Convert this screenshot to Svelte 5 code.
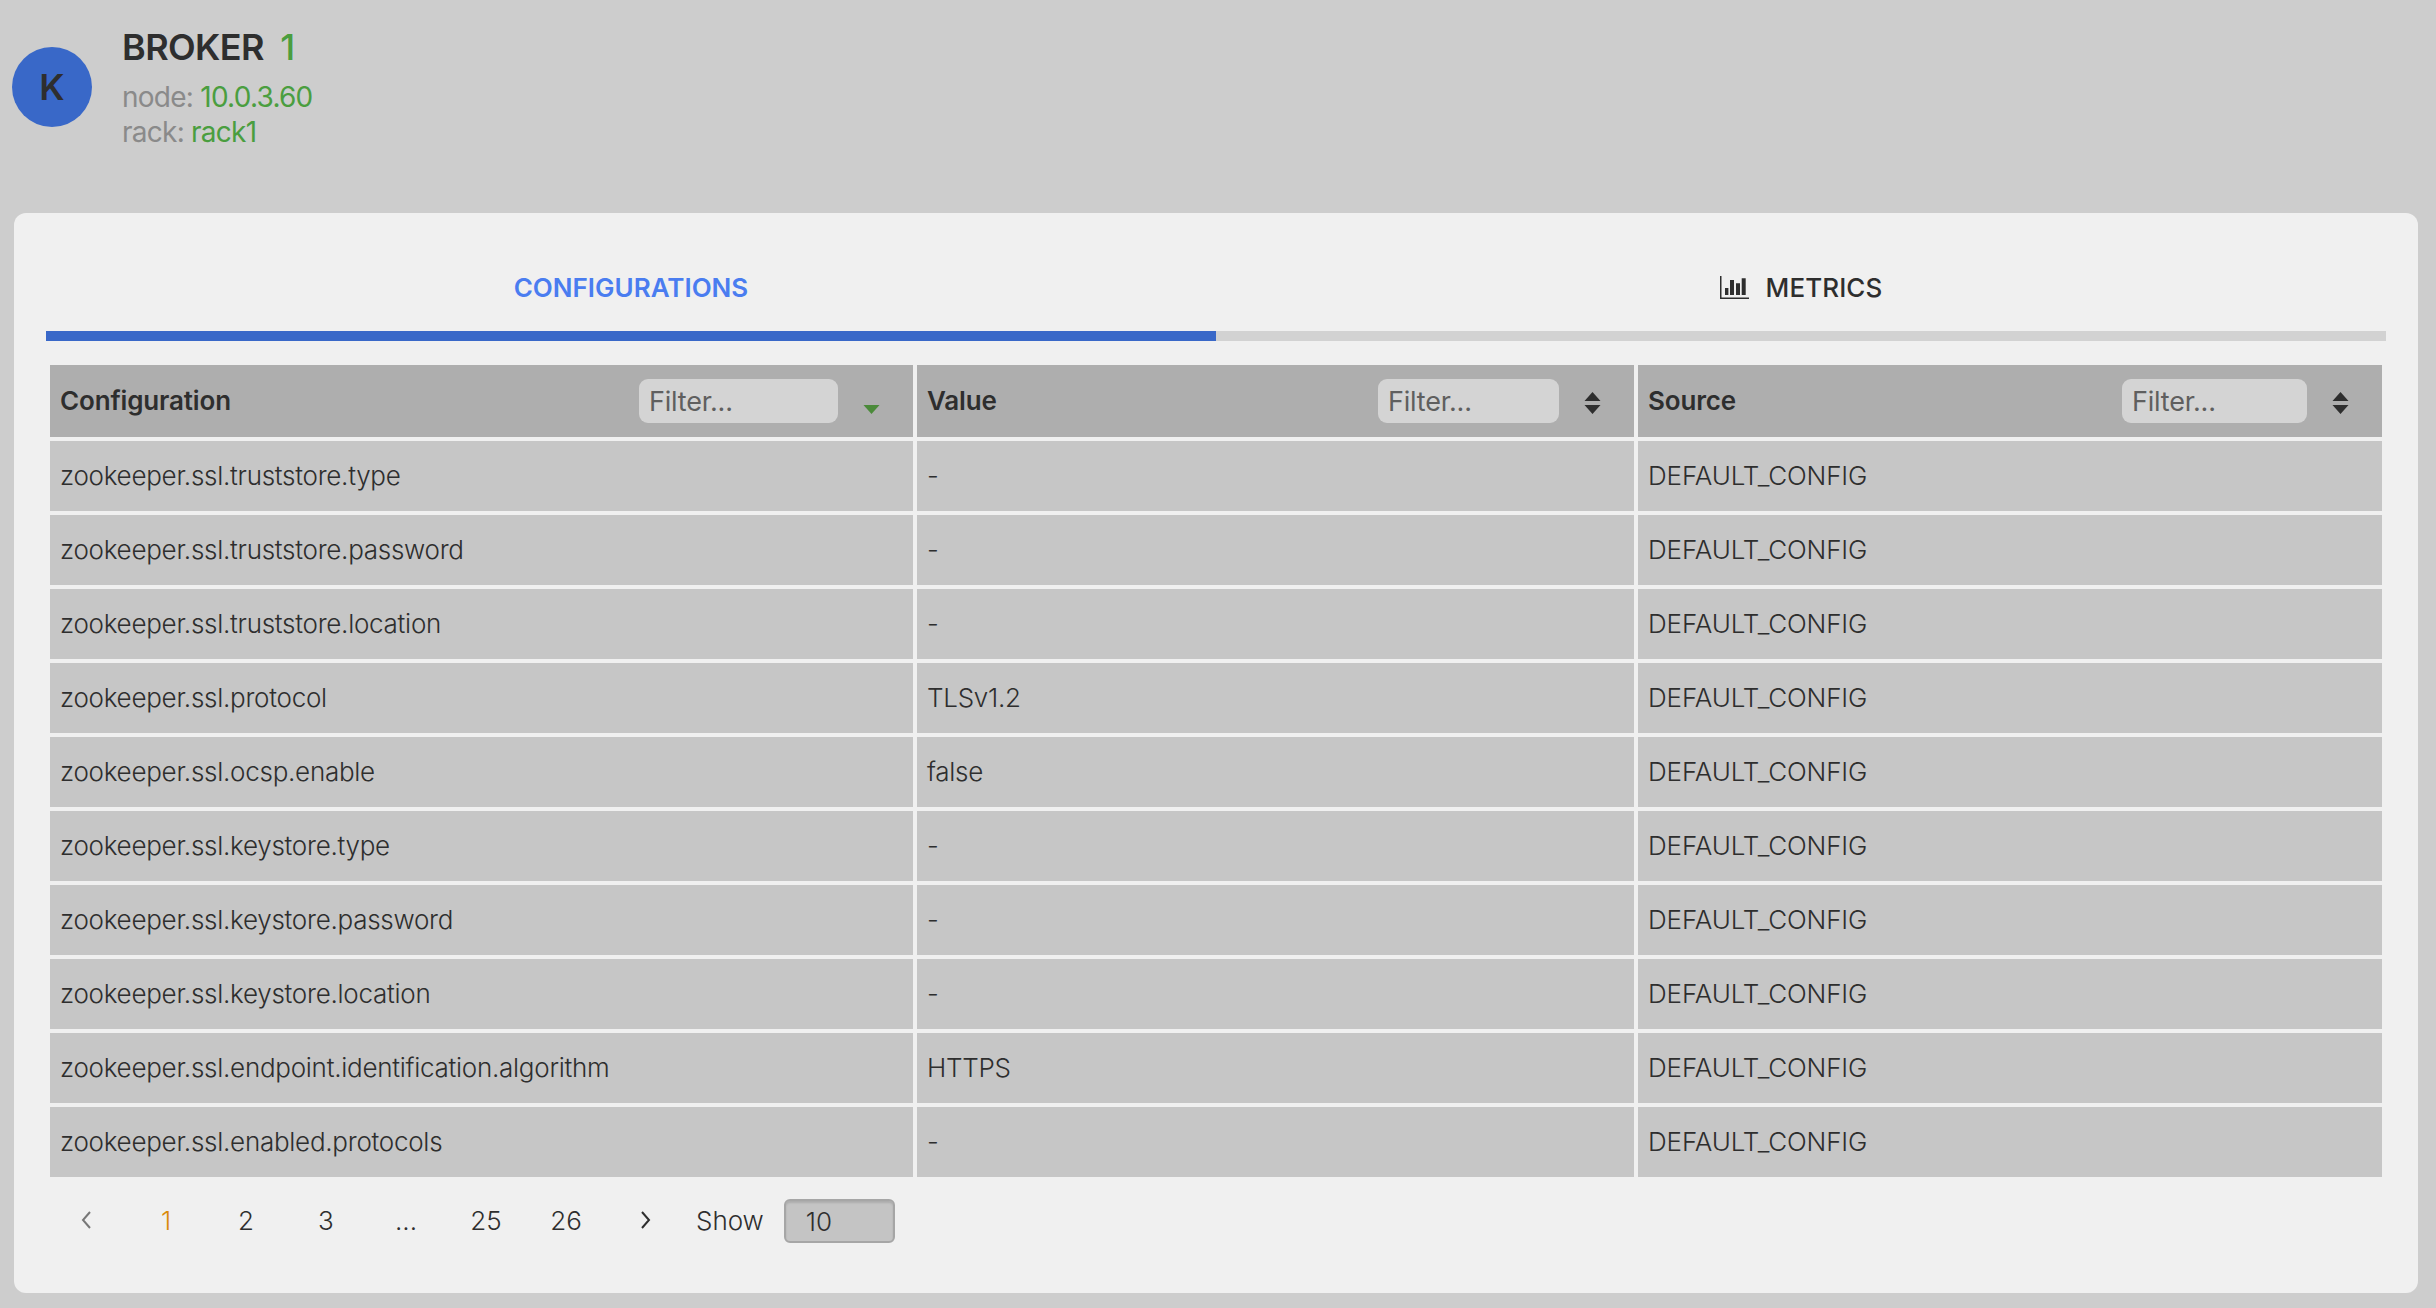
<script>
  const rows = [
    ['zookeeper.ssl.truststore.type', '-'],
    ['zookeeper.ssl.truststore.password', '-'],
    ['zookeeper.ssl.truststore.location', '-'],
    ['zookeeper.ssl.protocol', 'TLSv1.2'],
    ['zookeeper.ssl.ocsp.enable', 'false'],
    ['zookeeper.ssl.keystore.type', '-'],
    ['zookeeper.ssl.keystore.password', '-'],
    ['zookeeper.ssl.keystore.location', '-'],
    ['zookeeper.ssl.endpoint.identification.algorithm', 'HTTPS'],
    ['zookeeper.ssl.enabled.protocols', '-']
  ];
  const pages = ['2', '3', '...', '25', '26'];
  const columns = [
    { name: 'Configuration', w: 199, active: true },
    { name: 'Value', w: 181, active: false },
    { name: 'Source', w: 185, active: false }
  ];
</script>

<div class="page">
  <header class="head">
    <div class="avatar">K</div>
    <div class="info">
      <div class="title">BROKER <span class="green id">1</span></div>
      <div class="meta">node: <span class="green">10.0.3.60</span></div>
      <div class="meta">rack: <span class="green">rack1</span></div>
    </div>
  </header>

  <main class="panel">
    <div class="tabs">
      <div class="tab active">CONFIGURATIONS</div>
      <div class="tab">
        <svg class="chart" viewBox="0 0 29 23" width="29" height="23" aria-hidden="true">
          <path d="M.75 0v22.2H29" fill="none" stroke="#2e2e2e" stroke-width="1.5" />
          <path d="M5 12h3.4v7H5zM10 4h4v15h-4zM16 7.3h4V19h-4zM21.7 2.3h4V19h-4z" fill="#2e2e2e" />
        </svg>
        <span>METRICS</span>
      </div>
    </div>

    <table>
      <colgroup>
        <col class="c1" /><col class="c2" /><col class="c3" />
      </colgroup>
      <thead>
        <tr>
          {#each columns as col}
            <th>
              <div class="th">
                <span class="name">{col.name}</span>
                <input class="filter" placeholder="Filter..." style="width:{col.w}px" />
                {#if col.active}
                  <svg class="sort" viewBox="0 0 17 22" width="17" height="22" aria-hidden="true">
                    <path d="M0.5 13h16l-8 9z" fill="#4b8a3a" />
                  </svg>
                {:else}
                  <svg class="sort" viewBox="0 0 17 22" width="17" height="22" aria-hidden="true">
                    <path d="M8.5 0l8 9H.5zM.5 13h16l-8 9z" fill="#2e2e2e" />
                  </svg>
                {/if}
              </div>
            </th>
          {/each}
        </tr>
      </thead>
      <tbody>
        {#each rows as r}
          <tr>
            <td>{r[0]}</td>
            <td>{r[1]}</td>
            <td class="src">DEFAULT_CONFIG</td>
          </tr>
        {/each}
      </tbody>
    </table>

    <nav class="pager">
      <span class="pg arrow">
        <svg viewBox="0 0 12 20" width="12" height="20" aria-hidden="true"><path d="M10 2L3 10l7 8" fill="none" stroke="#777" stroke-width="2" /></svg>
      </span>
      <span class="pg current">1</span>
      {#each pages as p}
        <span class="pg">{p}</span>
      {/each}
      <span class="pg arrow">
        <svg viewBox="0 0 12 20" width="12" height="20" aria-hidden="true"><path d="M2 2l7 8-7 8" fill="none" stroke="#2e2e2e" stroke-width="2" /></svg>
      </span>
      <span class="show">Show</span>
      <div class="select">10</div>
    </nav>
  </main>
</div>

<style>
  :global(body) {
    margin: 0;
    background: #cdcdcd;
    font-family: Inter, "Liberation Sans", sans-serif;
    color: #2e2e2e;
  }
  .page {
    height: 1308px;
    overflow: hidden;
    box-sizing: border-box;
    padding: 26px 18px 0 14px;
  }
  .head {
    display: flex;
    align-items: center;
    gap: 30px;
    margin-left: -2px;
    height: 122px;
  }
  .avatar {
    width: 80px;
    height: 80px;
    border-radius: 50%;
    background: #3968c8;
    display: flex;
    align-items: center;
    justify-content: center;
    font-size: 36px;
    font-weight: 600;
    flex: none;
  }
  .title {
    font-size: 36px;
    line-height: 44px;
    font-weight: 600;
    letter-spacing: -0.6px;
    margin-bottom: 11px;
  }
  .id { margin-left: 8px; font-weight: 500; }
  .meta {
    font-size: 28px;
    line-height: 35px;
    letter-spacing: -0.75px;
    color: #8a8a8a;
  }
  .green { color: #4a9e3f; }
  .panel {
    margin-top: 65px;
    height: 1080px;
    box-sizing: border-box;
    background: #f0f0f0;
    border-radius: 12px;
    padding: 32px 32px 0;
  }
  .tabs {
    display: flex;
    height: 96px;
    background: linear-gradient(#d2d2d2, #d2d2d2) bottom / 100% 10px no-repeat;
  }
  .tab {
    flex: 1;
    box-sizing: border-box;
    height: 96px;
    padding-bottom: 12px;
    display: flex;
    align-items: center;
    justify-content: center;
    gap: 17px;
    font-size: 26px;
    font-weight: 500;
    letter-spacing: 0.1px;
  }
  .tab.active {
    color: #4a7df0;
    font-weight: 600;
    letter-spacing: 0;
    background: linear-gradient(#3968c8, #3968c8) bottom / 100% 10px no-repeat;
  }
  .chart { flex: none; }
  table {
    width: 2340px;
    margin-top: 20px;
    table-layout: fixed;
    border-collapse: separate;
    border-spacing: 4px;
  }
  .c1 { width: 863px; }
  .c2 { width: 717px; }
  .c3 { width: 744px; }
  th {
    height: 72px;
    padding: 0 10px;
    background: #aeaeae;
    text-align: left;
    font-weight: 600;
    font-size: 26px;
    letter-spacing: -0.15px;
  }
  .th { display: flex; align-items: center; }
  .name { flex: 1; margin-bottom: 2px; }
  .filter {
    box-sizing: border-box;
    height: 44px;
    border: 0;
    outline: 0;
    border-radius: 9px;
    background: #d4d4d4;
    padding: 0 10px;
    font: 400 27px Inter, sans-serif;
    letter-spacing: -0.2px;
    color: #5f5f5f;
  }
  .filter::placeholder { color: #5f5f5f; opacity: 1; }
  .sort { margin: 4px 23px 0 25px; flex: none; }
  td {
    height: 70px;
    box-sizing: border-box;
    padding: 0 11px 2px 10px;
    background: #c6c6c6;
    font-size: 26px;
    font-weight: 300;
    letter-spacing: -0.27px;
    color: #2e2e2e;
  }
  td.src { letter-spacing: -0.12px; }
  .pager {
    display: flex;
    align-items: center;
    margin: 18px 0 0;
    height: 44px;
    font-size: 26px;
    font-weight: 300;
  }
  .pg {
    width: 80px;
    box-sizing: border-box;
    padding-bottom: 2px;
    display: flex;
    justify-content: center;
    align-items: center;
    flex: none;
  }
  .current { color: #d98a0b; }
  .show { margin-left: 10px; padding-bottom: 1px; font-weight: 300; letter-spacing: -0.05px; }
  .select {
    box-sizing: border-box;
    width: 111px;
    height: 44px;
    margin-left: 20px;
    padding-left: 20px;
    display: flex;
    align-items: center;
    background: #c4c4c4;
    border: 2px solid #a6a6a6;
    border-radius: 6px;
    box-shadow: inset 0 2px 2px rgba(0, 0, 0, 0.12);
  }
</style>
